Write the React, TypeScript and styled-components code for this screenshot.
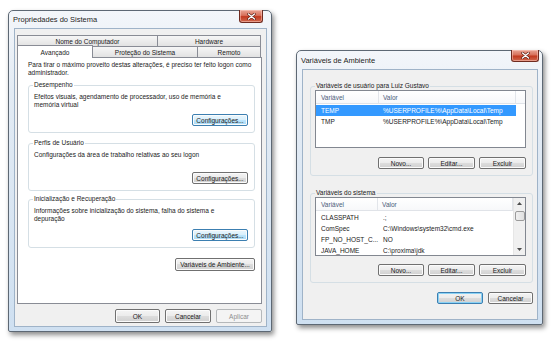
import React from 'react'
import styled, { createGlobalStyle, css } from 'styled-components'

const GlobalStyle = createGlobalStyle`
  html, body {
    margin: 0;
    padding: 0;
    background: #ffffff;
  }
  body {
    font-family: "Liberation Sans", Arial, sans-serif;
    font-size: 6.5px;
    color: #000000;
  }
  * {
    box-sizing: border-box;
  }
`

const Desktop = styled.div`
  position: relative;
  width: 554px;
  height: 350px;
  background: #ffffff;
  overflow: hidden;
`

// windows sit on a free desktop canvas, so they are placed by coordinates
const Win = styled.div<{ $left: number; $top: number; $width: number; $height: number }>`
  position: absolute;
  left: ${p => p.$left}px;
  top: ${p => p.$top}px;
  width: ${p => p.$width}px;
  height: ${p => p.$height}px;
  display: flex;
  flex-direction: column;
  padding: 0 4px 4px 5px;
  border: 1px solid #5d6874;
  border-radius: 5px 5px 2px 2px;
  background: linear-gradient(180deg, #f3f6fa 0%, #e3ebf4 25%, #cfe0f1 100%);
  box-shadow: 2px 3px 5px rgba(0, 0, 0, 0.45);
`

const TitleBar = styled.div<{ $height: number }>`
  height: ${p => p.$height}px;
  display: flex;
  align-items: center;
  justify-content: space-between;
`

const Title = styled.span`
  font-size: 7.5px;
  color: #1c1c1c;
  margin-left: -1px;
  text-shadow: 0 0 3px #ffffff;
`

const CloseButton = styled.div<{ $width: number; $height: number; $right: number }>`
  align-self: flex-start;
  margin-top: -1px;
  margin-right: ${p => p.$right}px;
  width: ${p => p.$width}px;
  height: ${p => p.$height}px;
  display: flex;
  align-items: center;
  justify-content: center;
  border: 1px solid #6f2b20;
  border-top: none;
  border-radius: 0 0 3px 3px;
  background: linear-gradient(180deg, #e8a595 0%, #d8715b 45%, #c2391f 55%, #d06a50 100%);
  box-shadow: inset 0 0 0 1px rgba(255, 210, 200, 0.5);
`

const WinBody = styled.div<{ $pad: string }>`
  flex: 1;
  display: flex;
  flex-direction: column;
  padding: ${p => p.$pad};
  border: 1px solid #9fb3c8;
  background: #f0f0f0;
`

const TabRow = styled.div`
  display: flex;
  height: 11px;
`

const Tab = styled.div<{ $w: number; $selected?: boolean }>`
  width: ${p => p.$w}px;
  height: 11px;
  display: flex;
  align-items: center;
  justify-content: center;
  margin-right: -1px;
  border: 1px solid #898c95;
  border-bottom: none;
  background: linear-gradient(180deg, #f6f6f6 0%, #ececec 50%, #e2e2e2 100%);
  color: #1a1a1a;
  ${p =>
    p.$selected &&
    css`
      position: relative;
      z-index: 1;
      height: 13px;
      margin-top: -1px;
      margin-bottom: -1px;
      background: #ffffff;
    `}
`

const Panel = styled.div`
  height: 247px;
  display: flex;
  flex-direction: column;
  padding: 3px 6px 0 10px;
  border: 1px solid #898c95;
  background: #ffffff;
`

const Para = styled.p<{ $lines?: number }>`
  margin: 0;
  line-height: 7.5px;
  min-height: ${p => (p.$lines ?? 1) * 7.5}px;
  color: #1a1a1a;
`

const Group = styled.fieldset<{ $gap?: number }>`
  margin: ${p => p.$gap ?? 0}px 0 0 0;
  padding: 0 6px 6px 4px;
  display: flex;
  flex-direction: column;
  border: 1px solid #d5dfe5;
  border-radius: 3px;
  min-width: 0;
`

const Legend = styled.legend`
  padding: 0 1px;
  line-height: 8px;
  color: #1a1a1a;
`

const GroupText = styled(Para)`
  margin-top: 4px;
  padding-left: 1px;
  max-width: 200px;
`

const ButtonRow = styled.div<{ $top: number; $gap?: number }>`
  display: flex;
  justify-content: flex-end;
  gap: ${p => p.$gap ?? 5}px;
  margin-top: ${p => p.$top}px;
`

const Button = styled.div<{ $w: number; $h?: number; $variant?: 'hot' | 'default' | 'disabled' }>`
  width: ${p => p.$w}px;
  height: ${p => p.$h ?? 12}px;
  display: flex;
  align-items: center;
  justify-content: center;
  border: 1px solid #707070;
  border-radius: 2px;
  color: #1a1a1a;
  background: linear-gradient(180deg, #f4f4f4 0%, #ebebeb 50%, #dddddd 50%, #d0d0d0 100%);
  box-shadow: inset 0 0 0 1px #fbfbfb;
  ${p =>
    p.$variant === 'hot' &&
    css`
      border-color: #3c7fb1;
      background: linear-gradient(180deg, #eaf6fd 0%, #d9f0fc 50%, #bee6fd 50%, #a7d9f5 100%);
    `}
  ${p =>
    p.$variant === 'default' &&
    css`
      border-color: #3c7fb1;
      box-shadow: inset 0 0 0 1px #8ad2f5;
      background: linear-gradient(180deg, #f2f2f2 0%, #ebebeb 50%, #dddddd 50%, #cfcfcf 100%);
    `}
  ${p =>
    p.$variant === 'disabled' &&
    css`
      border-color: #b5b8ba;
      background: #f4f4f4;
      color: #8d8d8d;
      box-shadow: none;
    `}
`

const ListBox = styled.div<{ $h: number }>`
  height: ${p => p.$h}px;
  display: flex;
  border: 1px solid #828790;
  background: #ffffff;
  overflow: hidden;
`

const ListMain = styled.div`
  flex: 1;
  display: flex;
  flex-direction: column;
  min-width: 0;
`

const HeaderRow = styled.div`
  display: flex;
  height: 13px;
  flex-shrink: 0;
  border-bottom: 1px solid #e0e3e8;
  background: linear-gradient(180deg, #ffffff 0%, #f7f8fa 100%);
  margin-bottom: 1px;
`

const HeaderCell = styled.div<{ $w?: number; $pad?: number }>`
  ${p => (p.$w ? `width: ${p.$w}px;` : 'flex: 1;')}
  display: flex;
  align-items: center;
  padding-left: ${p => p.$pad ?? 0}px;
  border-right: ${p => (p.$w ? '1px solid #e2e5ea' : 'none')};
  color: #4c607a;
`

const Row = styled.div<{ $selected?: boolean }>`
  display: flex;
  width: 200px;
  height: 11px;
  flex-shrink: 0;
  align-items: center;
  line-height: 11px;
  color: ${p => (p.$selected ? '#ffffff' : '#1a1a1a')};
  background: ${p => (p.$selected ? '#3399ff' : 'transparent')};
`

const Cell = styled.div<{ $w: number; $pad: number }>`
  width: ${p => p.$w}px;
  padding-left: ${p => p.$pad}px;
  white-space: nowrap;
  overflow: hidden;
`

const ScrollBar = styled.div`
  width: 12px;
  display: flex;
  flex-direction: column;
  align-items: center;
  background: #f0f0f0;
  border-left: 1px solid #e6e6e6;
`

const ScrollArrow = styled.div`
  width: 12px;
  height: 11px;
  display: flex;
  align-items: center;
  justify-content: center;
`

const ScrollTrack = styled.div`
  flex: 1;
  width: 100%;
  display: flex;
  flex-direction: column;
  align-items: center;
`

const Thumb = styled.div`
  width: 10px;
  height: 10px;
  margin-top: 2px;
  border: 1px solid #9b9b9b;
  border-radius: 2px;
  background: linear-gradient(90deg, #f0f0f0, #e0e0e0);
`

const CloseGlyph = () => (
  <svg width="9" height="7" viewBox="0 0 9 7">
    <path d="M1.5 1 L7.5 6 M7.5 1 L1.5 6" stroke="#5a1d12" strokeWidth="2.6" strokeLinecap="round" />
    <path d="M1.5 1 L7.5 6 M7.5 1 L1.5 6" stroke="#ffffff" strokeWidth="1.4" strokeLinecap="round" />
  </svg>
)

const Arrow = ({ down }: { down?: boolean }) => (
  <svg width="5" height="3" viewBox="0 0 5 3">
    <path d={down ? 'M0 0 L5 0 L2.5 3 Z' : 'M0 3 L5 3 L2.5 0 Z'} fill="#4d4d4d" />
  </svg>
)

type Variable = { name: string; value: string }

const userVars: Variable[] = [
  { name: 'TEMP', value: '%USERPROFILE%\\AppData\\Local\\Temp' },
  { name: 'TMP', value: '%USERPROFILE%\\AppData\\Local\\Temp' },
]

const systemVars: Variable[] = [
  { name: 'CLASSPATH', value: '.;' },
  { name: 'ComSpec', value: 'C:\\Windows\\system32\\cmd.exe' },
  { name: 'FP_NO_HOST_C...', value: 'NO' },
  { name: 'JAVA_HOME', value: 'C:\\proxima\\jdk' },
]

const VarList = ({ vars, height, selected, scroll }: { vars: Variable[]; height: number; selected?: number; scroll?: boolean }) => (
  <ListBox $h={height}>
    <ListMain>
      <HeaderRow>
        <HeaderCell $w={63} $pad={5}>Variável</HeaderCell>
        <HeaderCell $w={137} $pad={4}>Valor</HeaderCell>
        <HeaderCell />
      </HeaderRow>
      {vars.map((v, i) => (
        <Row key={v.name} $selected={i === selected}>
          <Cell $w={63} $pad={5}>{v.name}</Cell>
          <Cell $w={137} $pad={4}>{v.value}</Cell>
        </Row>
      ))}
    </ListMain>
    {scroll && (
      <ScrollBar>
        <ScrollArrow><Arrow /></ScrollArrow>
        <ScrollTrack><Thumb /></ScrollTrack>
        <ScrollArrow><Arrow down /></ScrollArrow>
      </ScrollBar>
    )}
  </ListBox>
)

const SystemProperties = () => (
  <Win $left={8} $top={10} $width={264} $height={322}>
    <TitleBar $height={17}>
      <Title>Propriedades do Sistema</Title>
      <CloseButton $width={24} $height={13} $right={4}><CloseGlyph /></CloseButton>
    </TitleBar>
    <WinBody $pad="6px 4px 3px 2px">
      <TabRow>
        <Tab $w={141}>Nome do Computador</Tab>
        <Tab $w={104}>Hardware</Tab>
      </TabRow>
      <TabRow>
        <Tab $w={76} $selected>Avançado</Tab>
        <Tab $w={106}>Proteção do Sistema</Tab>
        <Tab $w={64}>Remoto</Tab>
      </TabRow>
      <Panel>
        <Para $lines={2}>
          Para tirar o máximo proveito destas alterações, é preciso ter feito logon como administrador.
        </Para>
        <Group $gap={5}>
          <Legend>Desempenho</Legend>
          <GroupText $lines={2}>Efeitos visuais, agendamento de processador, uso de memória e memória virtual</GroupText>
          <ButtonRow $top={6}>
            <Button $w={56} $variant="hot">Configurações...</Button>
          </ButtonRow>
        </Group>
        <Group $gap={6}>
          <Legend>Perfis de Usuário</Legend>
          <GroupText $lines={2}>Configurações da área de trabalho relativas ao seu logon</GroupText>
          <ButtonRow $top={6}>
            <Button $w={56}>Configurações...</Button>
          </ButtonRow>
        </Group>
        <Group $gap={4}>
          <Legend>Inicialização e Recuperação</Legend>
          <GroupText $lines={2}>Informações sobre inicialização do sistema, falha do sistema e depuração</GroupText>
          <ButtonRow $top={7}>
            <Button $w={56} $variant="hot">Configurações...</Button>
          </ButtonRow>
        </Group>
        <ButtonRow $top={10}>
          <Button $w={80} $h={13}>Variáveis de Ambiente...</Button>
        </ButtonRow>
      </Panel>
      <ButtonRow $top={5} $gap={5}>
        <Button $w={45} $h={14}>OK</Button>
        <Button $w={46} $h={14}>Cancelar</Button>
        <Button $w={46} $h={14} $variant="disabled">Aplicar</Button>
      </ButtonRow>
    </WinBody>
  </Win>
)

const EnvironmentVariables = () => (
  <Win $left={296} $top={50} $width={247} $height={275}>
    <TitleBar $height={18}>
      <Title>Variáveis de Ambiente</Title>
      <CloseButton $width={28} $height={12} $right={-1}><CloseGlyph /></CloseButton>
    </TitleBar>
    <WinBody $pad="12px 4px 8px 7px">
      <Group>
        <Legend>Variáveis de usuário para Luiz Gustavo</Legend>
        <VarList vars={userVars} height={58} selected={0} />
        <ButtonRow $top={9} $gap={4}>
          <Button $w={46}>Novo...</Button>
          <Button $w={47}>Editar...</Button>
          <Button $w={47}>Excluir</Button>
        </ButtonRow>
      </Group>
      <Group $gap={13}>
        <Legend>Variáveis do sistema</Legend>
        <VarList vars={systemVars} height={59} scroll />
        <ButtonRow $top={8} $gap={4}>
          <Button $w={46}>Novo...</Button>
          <Button $w={47}>Editar...</Button>
          <Button $w={47}>Excluir</Button>
        </ButtonRow>
      </Group>
      <ButtonRow $top={9} $gap={5}>
        <Button $w={46} $variant="default">OK</Button>
        <Button $w={45}>Cancelar</Button>
      </ButtonRow>
    </WinBody>
  </Win>
)

export default function App() {
  return (
    <>
      <GlobalStyle />
      <Desktop>
        <SystemProperties />
        <EnvironmentVariables />
      </Desktop>
    </>
  )
}
